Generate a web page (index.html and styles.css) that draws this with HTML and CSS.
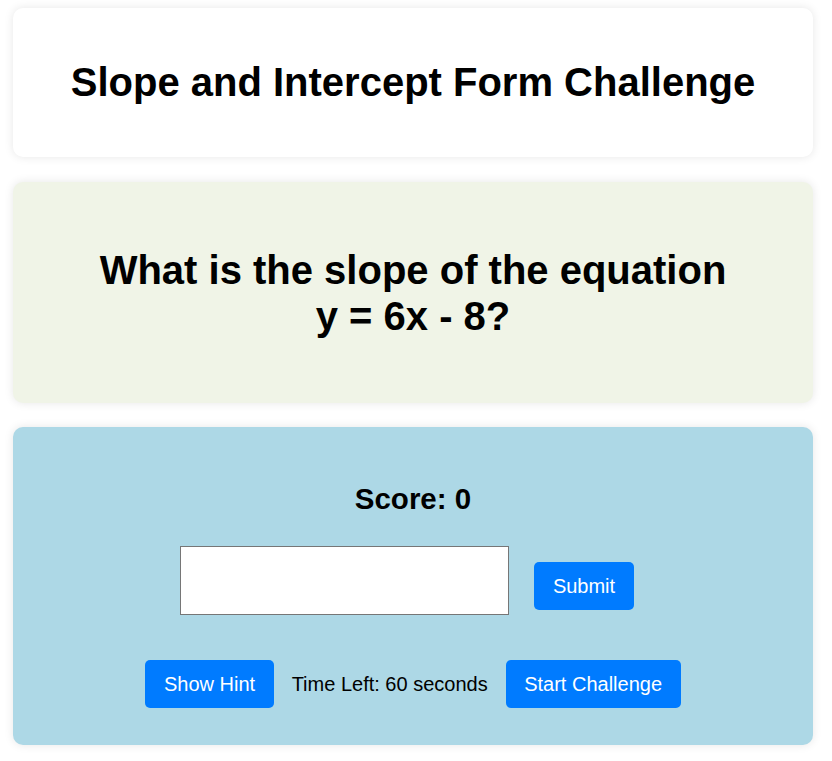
FILE: index.html
```html
<!DOCTYPE html>
<html>

<head>
    <meta charset="utf-8">
    <title>Slope and Intercept Form Challenge</title>
    <link rel="stylesheet" href="styles.css">
</head>

<body>
    <div id="content">
        <div class="card header">
            <h1>Slope and Intercept Form Challenge</h1>
        </div>
        <div class="card question">
            <h2 id="question">What is the slope of the equation<br>y = 6x - 8?</h2>
        </div>
        <div class="card game">
            <p class="score">Score: <span id="score">0</span></p>
            <div class="answer-row">
                <input id="answer" type="text" value="">
                <button id="submit">Submit</button>
            </div>
            <div class="control-row">
                <button id="hint">Show Hint</button>
                <span id="timer">Time Left: 60 seconds</span>
                <button id="start">Start Challenge</button>
            </div>
        </div>
    </div>
</body>

</html>
```

FILE: styles.css
```css
body {
    margin: 0;
    background: white;
    font-family: "Liberation Sans", Arial, sans-serif;
    color: black;
}

#content {
    width: 800px;
    margin: 8px 13px;
}

.card {
    border-radius: 10px;
    box-shadow: 0 0 10px rgba(0, 0, 0, 0.1);
    text-align: center;
}

.header {
    background: white;
    padding: 51px 20px 52px;
    margin-bottom: 25px;
}

h1 {
    margin: 0;
    font-size: 40px;
    line-height: 46px;
}

.question {
    background: #f0f4e7;
    padding: 65px 20px 64px;
    margin-bottom: 24px;
}

h2 {
    margin: 0;
    font-size: 40px;
    line-height: 46px;
}

.game {
    background: lightblue;
    padding: 55px 20px 37px;
}

.score {
    margin: 0;
    font-size: 29.5px;
    line-height: 33px;
    font-weight: bold;
}

.answer-row {
    display: flex;
    justify-content: center;
    align-items: flex-start;
    gap: 25px;
    margin-top: 31px;
    padding-right: 12px;
}

#answer {
    box-sizing: border-box;
    width: 329px;
    height: 69px;
    border: 1px solid #767676;
    background: white;
    font-size: 20px;
    padding: 0 10px;
}

button {
    background: #007bff;
    color: white;
    border: 0;
    border-radius: 5px;
    font-family: "Liberation Sans", Arial, sans-serif;
    font-size: 20px;
    line-height: 24px;
    padding: 12px 18.5px;
}

#submit {
    margin-top: 16px;
}

.control-row {
    display: flex;
    justify-content: center;
    align-items: center;
    gap: 18px;
    margin-top: 45px;
}

#timer {
    font-size: 20px;
}
```
